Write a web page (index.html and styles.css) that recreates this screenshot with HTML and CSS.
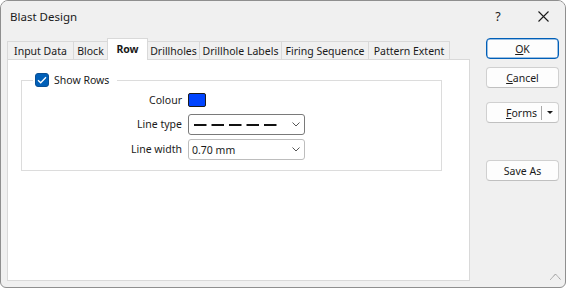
FILE: index.html
```html
<!DOCTYPE html>
<html>
<head>
<meta charset="utf-8">
<title>Blast Design</title>
<link rel="stylesheet" href="styles.css">
</head>
<body>
<div class="window">
  <div class="titlebar">
    <span class="title">Blast Design</span>
    <div class="caption">
      <span class="cap-btn help">?</span>
      <span class="cap-btn close"><svg width="11" height="11" viewBox="0 0 11 11"><path d="M0.5 0.5L10.5 10.5M10.5 0.5L0.5 10.5" stroke="#1a1a1a" stroke-width="1.1" fill="none"/></svg></span>
    </div>
  </div>
  <div class="body">
    <div class="left">
      <div class="tabs">
        <div class="tab">Input Data</div>
        <div class="tab">Block</div>
        <div class="tab active">Row</div>
        <div class="tab">Drillholes</div>
        <div class="tab">Drillhole Labels</div>
        <div class="tab">Firing Sequence</div>
        <div class="tab">Pattern Extent</div>
      </div>
      <div class="panel">
        <fieldset class="group">
          <legend class="legend">
            <span class="check"><svg width="10" height="8" viewBox="0 0 10 8"><path d="M1 4.2L3.7 6.8L9 1.2" stroke="#fff" stroke-width="1.3" fill="none"/></svg></span>
            <span>Show Rows</span>
          </legend>
          <div class="form">
            <span class="lbl row1">Colour</span>
            <span class="swatch"></span>
            <span class="lbl">Line type</span>
            <div class="select dark">
              <svg class="dashes" width="84" height="2" viewBox="0 0 84 2"><line x1="0" y1="1" x2="84" y2="1" stroke="#111" stroke-width="2" stroke-dasharray="12.5 5"/></svg>
              <svg class="chev" width="8" height="5" viewBox="0 0 8 5"><path d="M0.5 0.5L4 4L7.5 0.5" stroke="#555" stroke-width="1" fill="none"/></svg>
            </div>
            <span class="lbl">Line width</span>
            <div class="select light">
              <span class="val">0.70 mm</span>
              <svg class="chev" width="8" height="5" viewBox="0 0 8 5"><path d="M0.5 0.5L4 4L7.5 0.5" stroke="#555" stroke-width="1" fill="none"/></svg>
            </div>
          </div>
        </fieldset>
      </div>
    </div>
    <div class="buttons">
      <div class="btn default"><span><u>O</u>K</span></div>
      <div class="btn cancel"><span><u>C</u>ancel</span></div>
      <div class="btn forms"><span class="forms-main"><u>F</u>orms</span><span class="sep"></span><span class="drop"><span class="tri"></span></span></div>
      <div class="btn saveas"><span>Save As</span></div>
    </div>
  </div>
  <svg class="grip" width="11" height="7" viewBox="0 0 11 7"><path d="M0.5 6.5L5.5 1L10.5 6.5" stroke="#7a7a7a" stroke-width="1" fill="none" stroke-dasharray="1 0.6"/></svg>
</div>
</body>
</html>
```

FILE: styles.css
```css
html, body {
  margin: 0;
  padding: 0;
  background: #ffffff;
}

body {
  font-family: "Noto Sans", "Liberation Sans", sans-serif;
  font-size: 10.5px;
  color: #1a1a1a;
}

.window {
  position: relative;
  box-sizing: border-box;
  width: 566px;
  height: 288px;
  border: 1px solid #8f8f8f;
  border-radius: 8px 8px 6px 6px;
  background: #f0f0f0;
  display: flex;
  flex-direction: column;
  overflow: hidden;
}

.titlebar {
  height: 30px;
  flex: none;
  display: flex;
  align-items: center;
  padding-left: 9px;
  background: #f0f0f0;
}

.title {
  font-size: 11.5px;
  flex: 1;
}

.caption {
  display: flex;
  height: 30px;
}

.cap-btn {
  display: flex;
  align-items: center;
  justify-content: center;
  height: 30px;
}

.help {
  width: 46px;
  font-size: 12.5px;
}

.close {
  width: 44px;
}

.body {
  flex: 1;
  display: flex;
  min-height: 0;
}

.left {
  margin-left: 6px;
  width: 463px;
  padding-top: 7px;
  display: flex;
  flex-direction: column;
}

.tabs {
  height: 21px;
  display: flex;
  align-items: flex-end;
  flex: none;
}

.tab {
  box-sizing: border-box;
  height: 18px;
  border: 1px solid #d9d9d9;
  border-bottom: none;
  background: #f0f0f0;
  display: flex;
  align-items: center;
  justify-content: center;
  margin-left: -1px;
  white-space: nowrap;
}

.tab:nth-child(1) { width: 67px; margin-left: 0; }
.tab:nth-child(2) { width: 35px; }
.tab:nth-child(3) { width: 41px; }
.tab:nth-child(4) { width: 53px; }
.tab:nth-child(5) { width: 83px; }
.tab:nth-child(6) { width: 88px; }
.tab:nth-child(7) { width: 82px; }

.tab.active {
  height: 22px;
  margin-bottom: -1px;
  padding-bottom: 2px;
  background: #ffffff;
  font-weight: 700;
  position: relative;
  z-index: 1;
}

.panel {
  flex: 1;
  margin-bottom: 6px;
  background: #ffffff;
  border: 1px solid #d9d9d9;
}

.group {
  box-sizing: border-box;
  width: 421px;
  margin: 13px 0 0 13px;
  padding: 6px 0 10px 0;
  border: 1px solid #dcdcdc;
  min-width: 0;
}

.legend {
  margin-left: 11px;
  padding: 0 8px 0 2px;
  height: 14px;
  display: flex;
  align-items: center;
  gap: 5px;
}

.check {
  box-sizing: border-box;
  width: 14px;
  height: 14px;
  border-radius: 3px;
  background: #005fb8;
  border: 1px solid #0a4f94;
  display: flex;
  align-items: center;
  justify-content: center;
}

.form {
  display: grid;
  grid-template-columns: 160px 117px;
  grid-template-rows: 14px 28px 25px;
  column-gap: 6px;
}

.lbl {
  justify-self: end;
  align-self: end;
  height: 21px;
  line-height: 21px;
}

.lbl.row1 {
  height: 14px;
  line-height: 14px;
}

.swatch {
  box-sizing: border-box;
  width: 18px;
  height: 14px;
  background: #0044ff;
  border: 1px solid #1c1c1c;
  border-radius: 2px;
}

.select {
  box-sizing: border-box;
  align-self: end;
  height: 21px;
  border: 1px solid #bdbdbd;
  border-radius: 3px;
  background: #ffffff;
  display: flex;
  align-items: center;
  justify-content: space-between;
  padding: 0 4px 0 5px;
}

.select.dark {
  border-color: #7a7a7a;
}

.select.light {
  padding-left: 3px;
}

.dashes {
  display: block;
}

.chev {
  display: block;
}

.buttons {
  margin-left: 16px;
  width: 73px;
  padding-top: 7px;
  display: flex;
  flex-direction: column;
}

.btn {
  box-sizing: border-box;
  width: 73px;
  height: 21px;
  border: 1px solid #d0d0d0;
  border-bottom-color: #c0c0c0;
  border-radius: 4px;
  background: #fdfdfd;
  display: flex;
  align-items: center;
  justify-content: center;
  flex: none;
}

.btn.default {
  border: 1px solid #005fb8;
  box-shadow: inset 0 0 0 0.5px #3b82c8;
}

.btn.cancel { margin-top: 8px; }
.btn.forms { margin-top: 14px; justify-content: flex-start; }
.btn.saveas { margin-top: 37px; }

.forms-main {
  padding-left: 19px;
  width: 35px;
}

.sep {
  width: 1px;
  height: 14px;
  background: #a8a8a8;
}

.drop {
  flex: 1;
  display: flex;
  align-items: center;
  justify-content: center;
}

.tri {
  width: 0;
  height: 0;
  border-left: 3px solid transparent;
  border-right: 3px solid transparent;
  border-top: 3px solid #1a1a1a;
}

.grip {
  position: absolute;
  right: 4px;
  bottom: 7px;
}
```
